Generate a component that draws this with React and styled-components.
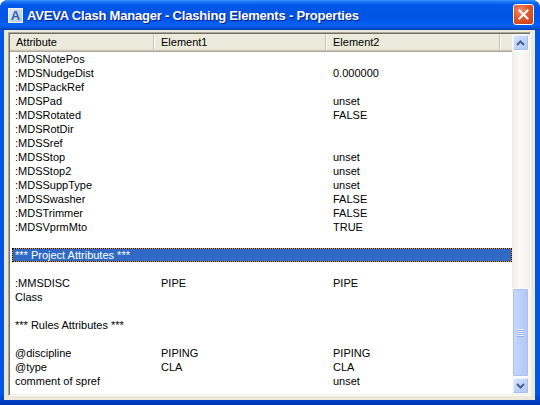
import React from "react";
import styled, { createGlobalStyle } from "styled-components";

const Global = createGlobalStyle`
  html, body { margin: 0; padding: 0; background: #ffffff; }
  body { font-family: "Liberation Sans", Arial, sans-serif; }
  * { box-sizing: border-box; }
`;

const Window = styled.div`
  width: 540px;
  height: 405px;
  display: flex;
  flex-direction: column;
  border-radius: 8px 8px 0 0;
  overflow: hidden;
  background: #0055e5;
`;

const TitleBar = styled.div`
  height: 30px;
  flex: none;
  display: flex;
  align-items: center;
  padding: 1px 6px 0 8px;
  background: linear-gradient(
    180deg,
    #3d95ff 0%,
    #1670f5 7%,
    #0058e8 18%,
    #0054e3 45%,
    #0056ea 68%,
    #0062f6 84%,
    #0054da 93%,
    #003eae 100%
  );
`;

const AppIcon = styled.span`
  width: 15px;
  height: 15px;
  flex: none;
  display: flex;
  align-items: center;
  justify-content: center;
  background: linear-gradient(135deg, #e4ebf4 0%, #b9c7da 100%);
  border: 1px solid #eef3fa;
  font: bold 13px "Liberation Sans", Arial, sans-serif;
  color: #2f63b8;
  line-height: 1;
`;

const Title = styled.span`
  margin-left: 4px;
  flex: 1;
  font: bold 13px "Liberation Sans", Arial, sans-serif;
  letter-spacing: -0.2px;
  color: #ffffff;
  text-shadow: 1px 1px 0 #0a1e82;
  white-space: nowrap;
`;

const CloseButton = styled.div`
  width: 21px;
  height: 21px;
  flex: none;
  margin-top: -2px;
  border: 1px solid #ffffff;
  border-radius: 3px;
  display: flex;
  align-items: center;
  justify-content: center;
  background: radial-gradient(circle at 35% 30%, #f0906c 0%, #e0572c 45%, #c63d12 100%);
`;

const Frame = styled.div`
  flex: 1;
  display: flex;
  padding: 0 5px 5px 4px;
  background: linear-gradient(180deg, #0055e5 0%, #0055e5 97%, #0032b0 100%);
  min-height: 0;
`;

const Client = styled.div`
  flex: 1;
  display: flex;
  padding: 2px 4px 4px 4px;
  background: #ece9d8;
  min-height: 0;
`;

const ListBox = styled.div`
  flex: 1;
  display: flex;
  border: 1px solid;
  border-color: #aca899 #ffffff #ffffff #aca899;
  padding: 1px;
  box-shadow: inset 1px 1px 0 #716f64, inset -1px -1px 0 #f1efe2;
  background: #ffffff;
  min-height: 0;
`;

const ListContent = styled.div`
  flex: 1;
  display: flex;
  flex-direction: column;
  overflow: hidden;
  background: #ffffff;
`;

const COLS = "144px 172px 174px 1fr";

const Header = styled.div`
  height: 18px;
  flex: none;
  display: grid;
  grid-template-columns: ${COLS};
  background: #ebeadb;
  box-shadow: inset 0 -1px 0 #aca899, inset 0 -2px 0 #cbc7b8, inset 0 -3px 0 #e2decd;
`;

const HeaderCell = styled.div`
  position: relative;
  display: flex;
  align-items: center;
  padding: 0 0 2px ${(p) => p.$pad}px;
  font-size: 11px;
  color: #000000;
  white-space: nowrap;
  &::after {
    content: "";
    position: absolute;
    right: 0;
    top: 0;
    bottom: 2px;
    width: 1px;
    background: #c7c5b2;
    box-shadow: 1px 0 0 #ffffff;
    display: ${(p) => (p.$last ? "none" : "block")};
  }
`;

const Row = styled.div`
  position: relative;
  height: 14px;
  flex: none;
  display: grid;
  grid-template-columns: ${COLS};
  font-size: 11px;
  line-height: 14px;
  color: ${(p) => (p.$selected ? "#ffffff" : "#000000")};
  background: ${(p) => (p.$selected ? "#316ac5" : "transparent")};
  margin-left: ${(p) => (p.$selected ? "2px" : "0")};
  border: ${(p) => (p.$selected ? "1px solid #e8a020" : "none")};
  &::after {
    content: "";
    position: absolute;
    inset: -1px;
    border: 1px dotted #000000;
    display: ${(p) => (p.$selected ? "block" : "none")};
  }
`;

const Cell = styled.div`
  padding-left: ${(p) => p.$pad}px;
  white-space: nowrap;
  overflow: hidden;
  margin-top: ${(p) => (p.$shift ? "-1px" : "0")};
`;

const ScrollBar = styled.div`
  width: 17px;
  flex: none;
  display: flex;
  flex-direction: column;
  background: linear-gradient(90deg, #eeede5 0%, #fbfbf8 45%, #f3f1ec 100%);
`;

const ScrollButton = styled.div`
  height: 17px;
  flex: none;
  display: flex;
  align-items: center;
  justify-content: center;
  border: 1px solid #ffffff;
  border-radius: 2px;
  background: linear-gradient(135deg, #dce7ff 0%, #c3d5fd 45%, #b2c8f8 100%);
  box-shadow: inset -1px -1px 0 #a6bdf0, inset 1px 1px 0 #e8efff;
`;

const Track = styled.div`
  flex: 1;
  display: flex;
  flex-direction: column;
  justify-content: flex-end;
`;

const Thumb = styled.div`
  height: 89px;
  display: flex;
  align-items: center;
  justify-content: center;
  border: 1px solid #ffffff;
  border-radius: 2px;
  background: linear-gradient(90deg, #c9d8fc 0%, #bccffb 50%, #b1c7f8 100%);
  box-shadow: inset 0 0 0 1px #a9c0f2;
`;

const Grip = styled.div`
  width: 7px;
  height: 8px;
  background: repeating-linear-gradient(
    180deg,
    #eef4fe 0px,
    #eef4fe 1px,
    #8cb0f8 1px,
    #8cb0f8 2px
  );
`;

const Chevron = ({ up }) => (
  <svg width="9" height="6" viewBox="0 0 9 6">
    <polyline
      points={up ? "1,5 4.5,1.5 8,5" : "1,1 4.5,4.5 8,1"}
      fill="none"
      stroke="#4d6185"
      strokeWidth="2"
    />
  </svg>
);

const rows = [
  [":MDSNotePos", "", ""],
  [":MDSNudgeDist", "", "0.000000"],
  [":MDSPackRef", "", ""],
  [":MDSPad", "", "unset"],
  [":MDSRotated", "", "FALSE"],
  [":MDSRotDir", "", ""],
  [":MDSSref", "", ""],
  [":MDSStop", "", "unset"],
  [":MDSStop2", "", "unset"],
  [":MDSSuppType", "", "unset"],
  [":MDSSwasher", "", "FALSE"],
  [":MDSTrimmer", "", "FALSE"],
  [":MDSVprmMto", "", "TRUE"],
  ["", "", ""],
  ["*** Project Attributes ***", "", "", true],
  ["", "", ""],
  [":MMSDISC", "PIPE", "PIPE"],
  ["Class", "", ""],
  ["", "", ""],
  ["*** Rules Attributes ***", "", ""],
  ["", "", ""],
  ["@discipline", "PIPING", "PIPING"],
  ["@type", "CLA", "CLA"],
  ["comment of spref", "", "unset"],
  ["", "", ""],
];

export default function App() {
  return (
    <>
      <Global />
      <Window>
        <TitleBar>
          <AppIcon>A</AppIcon>
          <Title>AVEVA Clash Manager - Clashing Elements - Properties</Title>
          <CloseButton>
            <svg width="11" height="11" viewBox="0 0 11 11">
              <path d="M1.5 1.5 L9.5 9.5 M9.5 1.5 L1.5 9.5" stroke="#ffffff" strokeWidth="2" strokeLinecap="square" />
            </svg>
          </CloseButton>
        </TitleBar>
        <Frame>
          <Client>
            <ListBox>
              <ListContent>
                <Header>
                  <HeaderCell $pad={6}>Attribute</HeaderCell>
                  <HeaderCell $pad={7}>Element1</HeaderCell>
                  <HeaderCell $pad={7}>Element2</HeaderCell>
                  <HeaderCell $pad={0} $last />
                </Header>
                {rows.map(([a, b, c, sel], i) => (
                  <Row key={i} $selected={!!sel}>
                    <Cell $pad={sel ? 2 : 5} $shift={sel}>{a}</Cell>
                    <Cell $pad={7}>{b}</Cell>
                    <Cell $pad={7}>{c}</Cell>
                    <Cell $pad={0} />
                  </Row>
                ))}
              </ListContent>
              <ScrollBar>
                <ScrollButton>
                  <Chevron up />
                </ScrollButton>
                <Track>
                  <Thumb>
                    <Grip />
                  </Thumb>
                </Track>
                <ScrollButton>
                  <Chevron />
                </ScrollButton>
              </ScrollBar>
            </ListBox>
          </Client>
        </Frame>
      </Window>
    </>
  );
}
